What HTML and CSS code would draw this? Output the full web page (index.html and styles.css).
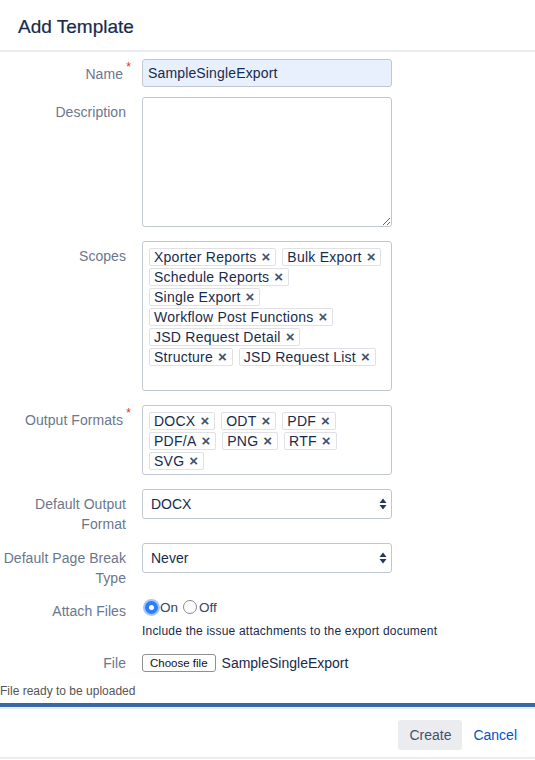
FILE: index.html
```html
<!DOCTYPE html>
<html>
<head>
<meta charset="utf-8">
<title>Add Template</title>
<link rel="stylesheet" href="styles.css">
</head>
<body>
<div class="dialog">
  <header class="head"><h2 class="title">Add Template</h2></header>
  <div class="form">
    <div class="row r-name">
      <div class="lbl req-lbl">Name<span class="req">*</span></div>
      <div class="field"><div class="input filled">SampleSingleExport</div></div>
    </div>
    <div class="row r-desc">
      <div class="lbl">Description</div>
      <div class="field"><textarea class="textarea"></textarea></div>
    </div>
    <div class="row r-scopes">
      <div class="lbl">Scopes</div>
      <div class="field">
        <div class="tagbox scopes">
          <div class="tagline"><span class="tag">Xporter Reports<span class="x">×</span></span><span class="tag">Bulk Export<span class="x">×</span></span></div>
          <div class="tagline"><span class="tag">Schedule Reports<span class="x">×</span></span></div>
          <div class="tagline"><span class="tag">Single Export<span class="x">×</span></span></div>
          <div class="tagline"><span class="tag">Workflow Post Functions<span class="x">×</span></span></div>
          <div class="tagline"><span class="tag">JSD Request Detail<span class="x">×</span></span></div>
          <div class="tagline"><span class="tag">Structure<span class="x">×</span></span><span class="tag">JSD Request List<span class="x">×</span></span></div>
        </div>
      </div>
    </div>
    <div class="row r-formats">
      <div class="lbl req-lbl">Output Formats<span class="req">*</span></div>
      <div class="field">
        <div class="tagbox formats">
          <div class="tagline"><span class="tag">DOCX<span class="x">×</span></span><span class="tag">ODT<span class="x">×</span></span><span class="tag">PDF<span class="x">×</span></span></div>
          <div class="tagline"><span class="tag">PDF/A<span class="x">×</span></span><span class="tag">PNG<span class="x">×</span></span><span class="tag">RTF<span class="x">×</span></span></div>
          <div class="tagline"><span class="tag">SVG<span class="x">×</span></span></div>
        </div>
      </div>
    </div>
    <div class="row r-sel1">
      <div class="lbl">Default Output<br>Format</div>
      <div class="field">
        <div class="select"><span>DOCX</span>
          <svg class="arrows" width="8" height="12" viewBox="0 0 8 12"><path d="M4 0.5 L7.5 5 L0.5 5 Z M0.5 7 L7.5 7 L4 11.5 Z" fill="#253858"/></svg>
        </div>
      </div>
    </div>
    <div class="row r-sel2">
      <div class="lbl">Default Page Break<br>Type</div>
      <div class="field">
        <div class="select"><span>Never</span>
          <svg class="arrows" width="8" height="12" viewBox="0 0 8 12"><path d="M4 0.5 L7.5 5 L0.5 5 Z M0.5 7 L7.5 7 L4 11.5 Z" fill="#253858"/></svg>
        </div>
      </div>
    </div>
    <div class="row r-attach">
      <div class="lbl">Attach Files</div>
      <div class="field">
        <div class="radios">
          <span class="radio on"></span><span class="rtext">On</span>
          <span class="radio off"></span><span class="rtext">Off</span>
        </div>
        <div class="help">Include the issue attachments to the export document</div>
      </div>
    </div>
    <div class="row r-file">
      <div class="lbl">File</div>
      <div class="field filefield">
        <span class="choose">Choose file</span><span class="fname">SampleSingleExport</span>
      </div>
    </div>
    <div class="ready">File ready to be uploaded</div>
  </div>
  <div class="progress"></div>
  <footer class="foot">
    <button class="btn-create">Create</button>
    <a class="cancel" href="#">Cancel</a>
  </footer>
</div>
</body>
</html>
```
FILE: styles.css
```css
html, body {
  margin: 0;
  padding: 0;
  background: #fff;
}
body {
  font-family: "Liberation Sans", Arial, sans-serif;
  font-size: 14px;
  color: #172b4d;
  width: 535px;
  overflow: hidden;
}
.head {
  height: 50px;
  border-bottom: 2px solid #ebecf0;
  box-sizing: content-box;
}
.title {
  margin: 0;
  padding: 15px 0 0 18px;
  font-size: 19px;
  line-height: 24px;
  font-weight: normal;
  color: #172b4d;
  -webkit-text-stroke: 0.2px #172b4d;
}
.form {
  padding-top: 7px;
}
.row {
  display: flex;
  gap: 16px;
}
.lbl {
  width: 126px;
  flex: none;
  text-align: right;
  color: #6b778c;
  line-height: 20px;
  padding-top: 5px;
  position: relative;
  letter-spacing: 0.05px;
}
.req-lbl {
  width: 123px;
  padding-right: 3px;
}
.req {
  position: absolute;
  right: -5px;
  top: 2px;
  color: #de350b;
  font-size: 12px;
  line-height: 12px;
}
.field {
  width: 250px;
  flex: none;
}
.r-name { margin-bottom: 10px; }
.r-desc { margin-bottom: 14px; }
.r-scopes { margin-bottom: 14px; }
.r-formats { margin-bottom: 14px; }
.r-sel1 { margin-bottom: 9px; }
.r-sel2 { margin-bottom: 9px; }
.r-attach { margin-bottom: 11px; }

.input {
  height: 28px;
  box-sizing: border-box;
  border: 1px solid #c1c7d0;
  border-radius: 3px;
  padding: 0 5px;
  line-height: 26px;
  font-size: 14px;
  letter-spacing: 0.15px;
}
.input.filled { background: #e8f0fe; }
.textarea {
  display: block;
  width: 250px;
  height: 130px;
  box-sizing: border-box;
  border: 1px solid #c1c7d0;
  border-radius: 3px;
  margin: 0;
  padding: 4px;
  font-family: inherit;
  resize: both;
}
.tagbox {
  box-sizing: border-box;
  border: 1px solid #c1c7d0;
  border-radius: 3px;
  padding: 6px 6px;
}
.scopes { height: 150px; }
.formats { height: 70px; }
.tagline {
  display: flex;
  gap: 6px;
  margin-bottom: 2px;
}
.tag {
  display: inline-flex;
  align-items: center;
  height: 18px;
  box-sizing: border-box;
  border: 1px solid #dfe1e6;
  border-radius: 2px;
  padding: 0 5px 0 4px;
  line-height: 16px;
  font-size: 14px;
  color: #172b4d;
  white-space: nowrap;
  letter-spacing: 0.25px;
}
.x {
  margin-left: 5px;
  color: #42526e;
  font-size: 15px;
  font-weight: bold;
  letter-spacing: 0;
}
.select {
  height: 30px;
  box-sizing: border-box;
  border: 1px solid #c1c7d0;
  border-radius: 3px;
  display: flex;
  align-items: center;
  justify-content: space-between;
  padding: 0 4px 0 8px;
  font-size: 14px;
  color: #172b4d;
}
.r-attach .lbl { padding-top: 4px; }
.radios {
  display: flex;
  align-items: center;
  height: 20px;
  font-size: 13.5px;
  color: #344563;
}
.radio {
  width: 13px;
  height: 13px;
  border-radius: 50%;
  box-sizing: border-box;
  flex: none;
}
.radio.on {
  margin-left: 3px;
  border: 4.5px solid #2f7cf6;
  background: #fff;
  box-shadow: 0 0 0 2px rgba(76, 154, 255, 0.55);
}
.radio.off {
  margin-left: 5px;
  width: 14px;
  height: 14px;
  border: 1px solid #8a8a8a;
  background: #fff;
}
.rtext { margin-left: 2px; }
.help {
  margin-top: 4px;
  font-size: 12px;
  line-height: 20px;
  color: #172b4d;
  white-space: nowrap;
  letter-spacing: 0.2px;
}
.filefield {
  display: flex;
  align-items: center;
  height: 22px;
}
.r-file { align-items: center; }
.r-file .lbl { padding-top: 0; }
.choose {
  display: inline-block;
  height: 18px;
  box-sizing: border-box;
  border: 1px solid #8f8f8f;
  border-radius: 3px;
  padding: 0 7px;
  line-height: 16px;
  font-size: 11.5px;
  color: #111;
  background: #fff;
}
.fname {
  margin-left: 6px;
  font-size: 14px;
  color: #172b4d;
}
.ready {
  margin-top: 9px;
  font-size: 12px;
  line-height: 16px;
  color: #555;
}
.progress {
  margin-top: 4px;
  height: 4px;
  background: #3568a8;
  border-bottom: 2px solid #ebecf0;
}
.foot {
  display: flex;
  justify-content: flex-end;
  align-items: center;
  gap: 11px;
  padding: 11px 18px 7px 0;
  border-bottom: 2px solid #ebecf0;
}
.btn-create {
  width: 64px;
  height: 30px;
  border: none;
  border-radius: 3px;
  background: #ebecf0;
  color: #42526e;
  font-family: inherit;
  font-size: 14px;
  padding: 0;
}
.cancel {
  color: #0052cc;
  text-decoration: none;
  font-size: 14px;
}
```
